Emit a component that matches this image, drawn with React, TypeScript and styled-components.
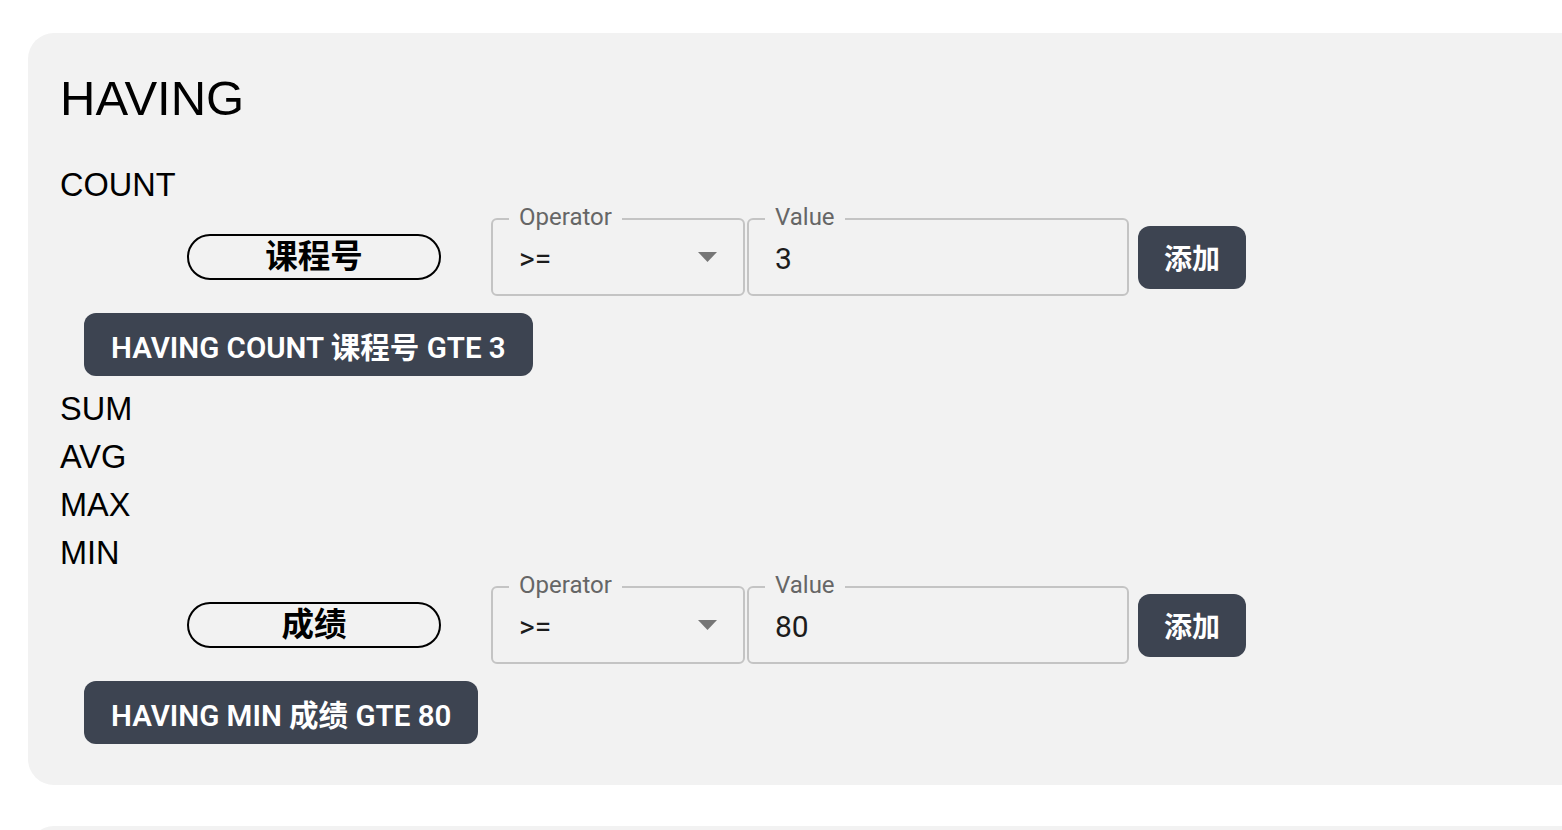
import React from "react";
import styled, { createGlobalStyle } from "styled-components";

const GlobalStyle = createGlobalStyle`
  html, body {
    margin: 0;
    padding: 0;
    background: #ffffff;
    overflow: hidden;
  }
  body {
    font-family: "Liberation Sans", Arial, sans-serif;
    color: #000;
  }
`;

const Page = styled.div`
  display: flex;
  flex-direction: column;
  gap: 41px;
  padding: 33px 0 0 28px;
`;

const Panel = styled.section`
  box-sizing: border-box;
  width: 1620px;
  background: #f2f2f2;
  border-radius: 26px;
  padding: 30px 32px 32px 32px;
  display: flex;
  flex-direction: column;
  align-items: flex-start;
`;

const EmptyPanel = styled(Panel)`
  height: 200px;
`;

const Title = styled.h2`
  margin: 0 0 28px 0;
  font-family: "Liberation Sans", Arial, sans-serif;
  font-size: 49px;
  font-weight: 400;
  line-height: 70px;
`;

const AggLabel = styled.div`
  font-family: "Liberation Sans", Arial, sans-serif;
  font-size: 32.5px;
  line-height: 48px;
`;

const ConditionRow = styled.div`
  display: flex;
  align-items: center;
  margin-top: 9px;
  margin-left: 127px;
`;

const FieldPill = styled.div`
  box-sizing: border-box;
  width: 254px;
  height: 46px;
  border: 2px solid #000;
  border-radius: 999px;
  padding-bottom: 5px;
  display: flex;
  align-items: center;
  justify-content: center;
  font-family: "Noto Sans CJK SC", "Liberation Sans", sans-serif;
  font-weight: 700;
  font-size: 32.5px;
  line-height: 1;
  margin-right: 50px;
`;

const Outlined = styled.div<{ $w: number }>`
  position: relative;
  box-sizing: border-box;
  width: ${(p) => p.$w}px;
  height: 78px;
  border: 2px solid #c4c4c4;
  border-radius: 6px;
  padding: 3px 26px 0 26px;
  display: flex;
  align-items: center;
  justify-content: space-between;
  font-family: Roboto, "Liberation Sans", sans-serif;
  font-size: 30px;
  color: #1c1c1c;
`;

const FloatLabel = styled.span`
  position: absolute;
  top: -17px;
  left: 16px;
  padding: 0 10px;
  background: #f2f2f2;
  font-family: Roboto, "Liberation Sans", sans-serif;
  font-size: 24px;
  line-height: 28px;
  color: #666666;
`;

const Arrow = styled.svg`
  width: 19px;
  height: 10px;
  margin-top: -3px;
  flex: none;
`;

const FieldGap = styled.div<{ $w: number }>`
  width: ${(p) => p.$w}px;
  flex: none;
`;

const AddButton = styled.button`
  box-sizing: border-box;
  width: 108px;
  height: 63px;
  border: none;
  border-radius: 12px;
  background: #3d4451;
  color: #ffffff;
  font-family: "Noto Sans CJK SC", "Liberation Sans", sans-serif;
  font-weight: 700;
  font-size: 28px;
  padding: 0;
  display: flex;
  align-items: center;
  justify-content: center;
`;

const ResultButton = styled.button`
  box-sizing: border-box;
  height: 63px;
  margin: 17px 0 9px 24px;
  padding: 0 27px;
  border: none;
  border-radius: 12px;
  background: #3d4451;
  color: #ffffff;
  font-family: Roboto, "Noto Sans CJK SC", "Liberation Sans", sans-serif;
  font-weight: 600;
  font-size: 29.5px;
  display: flex;
  align-items: center;
  white-space: nowrap;
`;

type Cond = { field: string; op: string; value: string; result: string };

const Condition: React.FC<Cond> = ({ field, op, value, result }) => (
  <>
    <ConditionRow>
      <FieldPill>{field}</FieldPill>
      <Outlined $w={254}>
        <FloatLabel>Operator</FloatLabel>
        <span>{op}</span>
        <Arrow viewBox="0 0 19 10">
          <path d="M0 0 L19 0 L9.5 10 Z" fill="#767676" />
        </Arrow>
      </Outlined>
      <FieldGap $w={2} />
      <Outlined $w={382}>
        <FloatLabel>Value</FloatLabel>
        <span>{value}</span>
      </Outlined>
      <FieldGap $w={9} />
      <AddButton>添加</AddButton>
    </ConditionRow>
    <ResultButton>{result}</ResultButton>
  </>
);

export default function App() {
  return (
    <>
      <GlobalStyle />
      <Page>
        <Panel>
          <Title>HAVING</Title>
          <AggLabel>COUNT</AggLabel>
          <Condition field="课程号" op=">=" value="3" result="HAVING COUNT 课程号 GTE 3" />
          <AggLabel>SUM</AggLabel>
          <AggLabel>AVG</AggLabel>
          <AggLabel>MAX</AggLabel>
          <AggLabel>MIN</AggLabel>
          <Condition field="成绩" op=">=" value="80" result="HAVING MIN 成绩 GTE 80" />
        </Panel>
        <EmptyPanel />
      </Page>
    </>
  );
}
